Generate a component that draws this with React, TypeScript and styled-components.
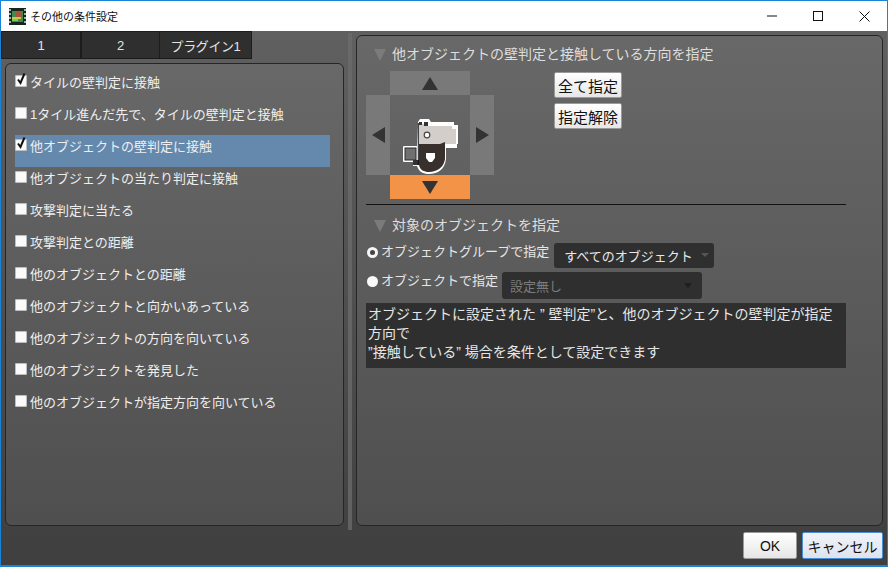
import * as React from 'react';
import styled, { createGlobalStyle } from 'styled-components';

const FONT = `"Liberation Sans", "Noto Sans CJK JP", sans-serif`;

const conditions = [
    { label: 'タイルの壁判定に接触', checked: true },
    { label: '1タイル進んだ先で、タイルの壁判定と接触' },
    { label: '他オブジェクトの壁判定に接触', checked: true, selected: true },
    { label: '他オブジェクトの当たり判定に接触' },
    { label: '攻撃判定に当たる' },
    { label: '攻撃判定との距離' },
    { label: '他のオブジェクトとの距離' },
    { label: '他のオブジェクトと向かいあっている' },
    { label: '他のオブジェクトの方向を向いている' },
    { label: '他のオブジェクトを発見した' },
    { label: '他のオブジェクトが指定方向を向いている' },
];

const Global = createGlobalStyle`
    html, body { margin: 0; padding: 0; background: #404040; }
    body { font-family: ${FONT}; font-size: 13px; }
`;

const Win = styled.div`
    width: 888px;
    height: 567px;
    box-sizing: border-box;
    border: 1px solid #1883d7;
    border-bottom-width: 2px;
    display: flex;
    flex-direction: column;
    overflow: hidden;
`;

const TitleBar = styled.div`
    height: 30px;
    flex: none;
    background: #fff;
    display: flex;
    align-items: center;
    padding-left: 8px;
    color: #111;
    font-size: 11px;
`;

const TitleText = styled.span`
    margin-left: 4px;
    flex: 1;
`;

const WinBtn = styled.div`
    width: 46px;
    height: 30px;
    display: flex;
    align-items: center;
    justify-content: center;
`;

const Body = styled.div`
    flex: 1;
    min-height: 0;
    display: flex;
    flex-direction: column;
    background: linear-gradient(#606060, #3f3f3f);
`;

const Columns = styled.div`
    display: flex;
    height: 499px;
    flex: none;
`;

const LeftCol = styled.div`
    width: 343px;
    flex: none;
    display: flex;
    flex-direction: column;
`;

const Tabs = styled.div`
    display: flex;
    height: 28px;
    flex: none;
`;

const Tab = styled.div<{ $w: number }>`
    width: ${p => p.$w}px;
    box-sizing: border-box;
    background: #2f2f2f;
    border: 1px solid #1c1c1c;
    border-left-width: ${p => (p.$w === 92 ? 0 : 1)}px;
    color: #e4e4e4;
    font-size: 13px;
    letter-spacing: ${p => (p.$w === 92 ? -0.4 : 0)}px;
    display: flex;
    align-items: center;
    justify-content: center;
`;

const Panel = styled.div`
    box-sizing: border-box;
    border: 1px solid #262626;
    border-radius: 6px;
    background: linear-gradient(#686868, #4f4f4f);
`;

const ListPanel = styled(Panel)`
    margin: 4px 0 0 4px;
    width: 339px;
    height: 463px;
    padding: 7px 0 0 9px;
`;

const Row = styled.div<{ $selected?: boolean }>`
    width: 315px;
    height: 32px;
    box-sizing: border-box;
    padding: 3px 0 0 0;
    display: flex;
    align-items: flex-start;
    background: ${p => (p.$selected ? '#6588ad' : 'transparent')};
    color: #eeeeee;
    font-size: 13px;
    line-height: 18px;
`;

const CheckBox = styled.span`
    width: 12px;
    height: 12px;
    margin: 1px 3px 0 0;
    flex: none;
    background: #fafafa;
    border-radius: 2px;
    box-shadow: inset 0 0 0 1px #bdbdbd;
    position: relative;
`;

const Tick = styled.svg`
    position: absolute;
    left: 0;
    top: -3px;
`;

const Splitter = styled.div`
    width: 4px;
    margin: 2px 0 0 4px;
    height: 497px;
    background: #6c6c6c;
    opacity: 0.75;
    flex: none;
`;

const RightPanel = styled(Panel)`
    margin: 4px 0 0 4px;
    width: 527px;
    height: 491px;
    padding: 8px 0 0 9px;
`;

const Heading = styled.div`
    display: flex;
    align-items: center;
    color: #dedede;
    font-size: 14px;
    height: 18px;
    padding-left: 8px;
`;

const HeadTri = styled.span`
    width: 0;
    height: 0;
    margin-right: 6px;
    margin-top: 3px;
    border-left: 6.5px solid transparent;
    border-right: 6.5px solid transparent;
    border-top: 12px solid #7b7b7b;
`;

const PadRow = styled.div`
    display: flex;
    margin-top: 9px;
`;

const Pad = styled.div`
    display: grid;
    grid-template-columns: 24px 80px 24px;
    grid-template-rows: 24px 80px 24px;
    width: 128px;
    height: 128px;
`;

const PadCell = styled.div<{ $col: number; $row: number; $active?: boolean }>`
    grid-column: ${p => p.$col};
    grid-row: ${p => p.$row};
    background: ${p => (p.$active ? '#f29347' : '#797979')};
    display: flex;
    align-items: center;
    justify-content: center;
`;

const Sprite = styled.svg`
    grid-column: 1 / 4;
    grid-row: 2;
    align-self: end;
    justify-self: start;
    margin-left: 36px;
`;

const BtnCol = styled.div`
    display: flex;
    flex-direction: column;
    gap: 5px;
    margin-left: 60px;
    margin-top: 1px;
`;

const Btn = styled.button<{ $primary?: boolean }>`
    box-sizing: border-box;
    font-family: ${FONT};
    color: #111;
    padding: 0;
    border-radius: 2px;
    border: 1px solid ${p => (p.$primary ? '#4a8fd6' : '#9a9a9a')};
    background: ${p =>
        p.$primary ? 'linear-gradient(#f0f3f9, #dde3ee)' : 'linear-gradient(#ffffff, #e6e6e6)'};
`;

const SmallBtn = styled(Btn)`
    width: 68px;
    height: 26px;
    font-size: 15px;
`;

const Divider = styled.div`
    width: 480px;
    height: 1px;
    background: #111;
    margin-top: 5px;
`;

const SecondHeading = styled(Heading)`
    margin-top: 10px;
`;

const OptionRow = styled.div<{ $top: number }>`
    display: flex;
    align-items: flex-start;
    margin-top: ${p => p.$top}px;
    color: #e6e6e6;
    font-size: 13px;
`;

const Radio = styled.span<{ $on?: boolean }>`
    width: 11px;
    height: 11px;
    box-sizing: border-box;
    margin: 4px 3px 0 1px;
    flex: none;
    border-radius: 50%;
    background: ${p => (p.$on ? '#444' : '#fafafa')};
    border: ${p => (p.$on ? '3px solid #f5f5f5' : 'none')};
`;

const OptionLabel = styled.span`
    line-height: 18px;
    margin-right: 5px;
`;

const Select = styled.div<{ $w: number; $h: number; $disabled?: boolean }>`
    width: ${p => p.$w}px;
    height: ${p => p.$h}px;
    box-sizing: border-box;
    background: #2f2f2f;
    border-radius: 3px;
    padding: 0 ${p => (p.$disabled ? 10 : 5)}px 0 ${p => (p.$disabled ? 8 : 10)}px;
    display: flex;
    align-items: center;
    justify-content: space-between;
    color: ${p => (p.$disabled ? '#7c7c7c' : '#e8e8e8')};
    font-size: 13px;
`;

const SecondSelect = styled(Select)`
    margin-left: -1px;
`;

const Caret = styled.span<{ $dark?: boolean }>`
    width: 0;
    height: 0;
    margin-top: ${p => (p.$dark ? 0 : -2)}px;
    border-left: ${p => (p.$dark ? 4.5 : 4)}px solid transparent;
    border-right: ${p => (p.$dark ? 4.5 : 4)}px solid transparent;
    border-top: ${p => (p.$dark ? 5 : 4)}px solid ${p => (p.$dark ? '#1f1f1f' : '#555')};
`;

const Note = styled.div`
    width: 480px;
    height: 65px;
    box-sizing: border-box;
    margin-top: 4px;
    padding: 2px;
    background: #2f2f2f;
    color: #e6e6e6;
    font-size: 14px;
    line-height: 19px;
`;

const Footer = styled.div`
    flex: 1;
    display: flex;
    justify-content: flex-end;
    gap: 5px;
    padding: 2px 4px 0 0;
`;

const FooterBtn = styled(Btn)<{ $w: number }>`
    width: ${p => p.$w}px;
    height: 27px;
    font-size: 14px;
`;

const Arrow = ({ dir, w = 16, h = 13 }: { dir: 'up' | 'down' | 'left' | 'right'; w?: number; h?: number }) => {
    const pts = {
        up: `${w / 2},0 ${w},${h} 0,${h}`,
        down: `0,0 ${w},0 ${w / 2},${h}`,
        left: `${w},0 ${w},${h} 0,${h / 2}`,
        right: `0,0 ${w},${h / 2} 0,${h}`,
    }[dir];
    return (
        <svg width={w} height={h} viewBox={`0 0 ${w} ${h}`}>
            <polygon points={pts} fill="#333" />
        </svg>
    );
};

const AppIcon = () => (
    <svg width="17" height="17" viewBox="0 0 17 17" shapeRendering="crispEdges">
        <rect x="0" y="0" width="17" height="17" fill="#17251b" />
        <rect x="0" y="1" width="2" height="2" fill="#9fb5a8" />
        <rect x="0" y="5" width="2" height="2" fill="#9fb5a8" />
        <rect x="0" y="9" width="2" height="2" fill="#9fb5a8" />
        <rect x="0" y="13" width="2" height="2" fill="#9fb5a8" />
        <rect x="15" y="1" width="2" height="2" fill="#9fb5a8" />
        <rect x="15" y="5" width="2" height="2" fill="#9fb5a8" />
        <rect x="15" y="9" width="2" height="2" fill="#9fb5a8" />
        <rect x="15" y="13" width="2" height="2" fill="#9fb5a8" />
        <rect x="3" y="3" width="11" height="11" fill="#3e8a50" />
        <rect x="7" y="4" width="6" height="5" fill="#a5563a" />
        <rect x="3" y="9" width="9" height="2" fill="#c9c94a" />
        <rect x="3" y="11" width="6" height="2" fill="#6fd06a" />
    </svg>
);

// ドット絵のキャラクター
const CharSprite = () => (
    <Sprite width="56" height="56" viewBox="0 0 56 56">
        <path
            d="M16 3 L18 0 H27 L29 3 H52 V6 H56 V25 H55 V29 H44 V40 C43 50 36 55 27 55 C21 55 17 53 15 47 H11 V43 H2 C1 43 1 42 1 41 V29 C1 28 1 27 2 27 H15 Z"
            fill="#fff"
        />
        <rect x="3" y="29" width="11" height="12" fill="#707070" stroke="#2a2a2a" strokeWidth="1" />
        <rect x="11" y="41" width="6" height="5" fill="#333" />
        <path d="M17 22 H43 V40 C42 48 35 53 27 53 C22 53 18 51 17 46 Z" fill="#37302c" />
        <path d="M17 5 H25 V7 H50 V10 H54 V25 H43 V23 L38 25 H17 Z" fill="#d4cecb" />
        <path d="M17 3 H20 V6 H17 Z M22 3 H26 V7 H22 Z" fill="#333" />
        <circle cx="25" cy="16" r="2.8" fill="#fff" stroke="#444" strokeWidth="1.2" />
        <path d="M24 34 H33 V39 L30 43 H27 L24 39 Z" fill="#fff" />
        <path d="M16.3 4 V46" stroke="#151515" strokeWidth="1" fill="none" />
    </Sprite>
);

const App: React.FC = () => (
    <>
        <Global />
        <Win>
            <TitleBar>
                <AppIcon />
                <TitleText>その他の条件設定</TitleText>
                <WinBtn>
                    <svg width="10" height="10" viewBox="0 0 10 10">
                        <rect x="0" y="4.5" width="10" height="1" fill="#111" />
                    </svg>
                </WinBtn>
                <WinBtn>
                    <svg width="10" height="10" viewBox="0 0 10 10">
                        <rect x="0.5" y="0.5" width="9" height="9" fill="none" stroke="#111" />
                    </svg>
                </WinBtn>
                <WinBtn>
                    <svg width="11" height="11" viewBox="0 0 11 11">
                        <path d="M0.5 0.5 L10.5 10.5 M10.5 0.5 L0.5 10.5" stroke="#111" fill="none" />
                    </svg>
                </WinBtn>
            </TitleBar>
            <Body>
                <Columns>
                    <LeftCol>
                        <Tabs>
                            <Tab $w={80}>1</Tab>
                            <Tab $w={79}>2</Tab>
                            <Tab $w={92}>プラグイン1</Tab>
                        </Tabs>
                        <ListPanel>
                            {conditions.map(c => (
                                <Row key={c.label} $selected={c.selected}>
                                    <CheckBox>
                                        {c.checked && (
                                            <Tick width="12" height="14" viewBox="0 0 12 14">
                                                <path d="M3 7.5 L5.5 11 L9.5 1.5" stroke="#111" strokeWidth="2" fill="none" />
                                            </Tick>
                                        )}
                                    </CheckBox>
                                    {c.label}
                                </Row>
                            ))}
                        </ListPanel>
                    </LeftCol>
                    <Splitter />
                    <RightPanel>
                        <Heading>
                            <HeadTri />
                            他オブジェクトの壁判定と接触している方向を指定
                        </Heading>
                        <PadRow>
                            <Pad>
                                <PadCell $col={2} $row={1}><Arrow dir="up" /></PadCell>
                                <PadCell $col={1} $row={2}><Arrow dir="left" w={13} h={16} /></PadCell>
                                <PadCell $col={3} $row={2}><Arrow dir="right" w={13} h={16} /></PadCell>
                                <PadCell $col={2} $row={3} $active><Arrow dir="down" /></PadCell>
                                <CharSprite />
                            </Pad>
                            <BtnCol>
                                <SmallBtn>全て指定</SmallBtn>
                                <SmallBtn>指定解除</SmallBtn>
                            </BtnCol>
                        </PadRow>
                        <Divider />
                        <SecondHeading>
                            <HeadTri />
                            対象のオブジェクトを指定
                        </SecondHeading>
                        <OptionRow $top={10}>
                            <Radio $on />
                            <OptionLabel>オブジェクトグループで指定</OptionLabel>
                            <Select $w={160} $h={25}>
                                すべてのオブジェクト
                                <Caret />
                            </Select>
                        </OptionRow>
                        <OptionRow $top={4}>
                            <Radio />
                            <OptionLabel>オブジェクトで指定</OptionLabel>
                            <SecondSelect $w={200} $h={27} $disabled>
                                設定無し
                                <Caret $dark />
                            </SecondSelect>
                        </OptionRow>
                        <Note>
                            オブジェクトに設定された ” 壁判定”と、他のオブジェクトの壁判定が指定方向で
                            <br />
                            ”接触している” 場合を条件として設定できます
                        </Note>
                    </RightPanel>
                </Columns>
                <Footer>
                    <FooterBtn $w={54}>OK</FooterBtn>
                    <FooterBtn $w={81} $primary>キャンセル</FooterBtn>
                </Footer>
            </Body>
        </Win>
    </>
);

export default App;
